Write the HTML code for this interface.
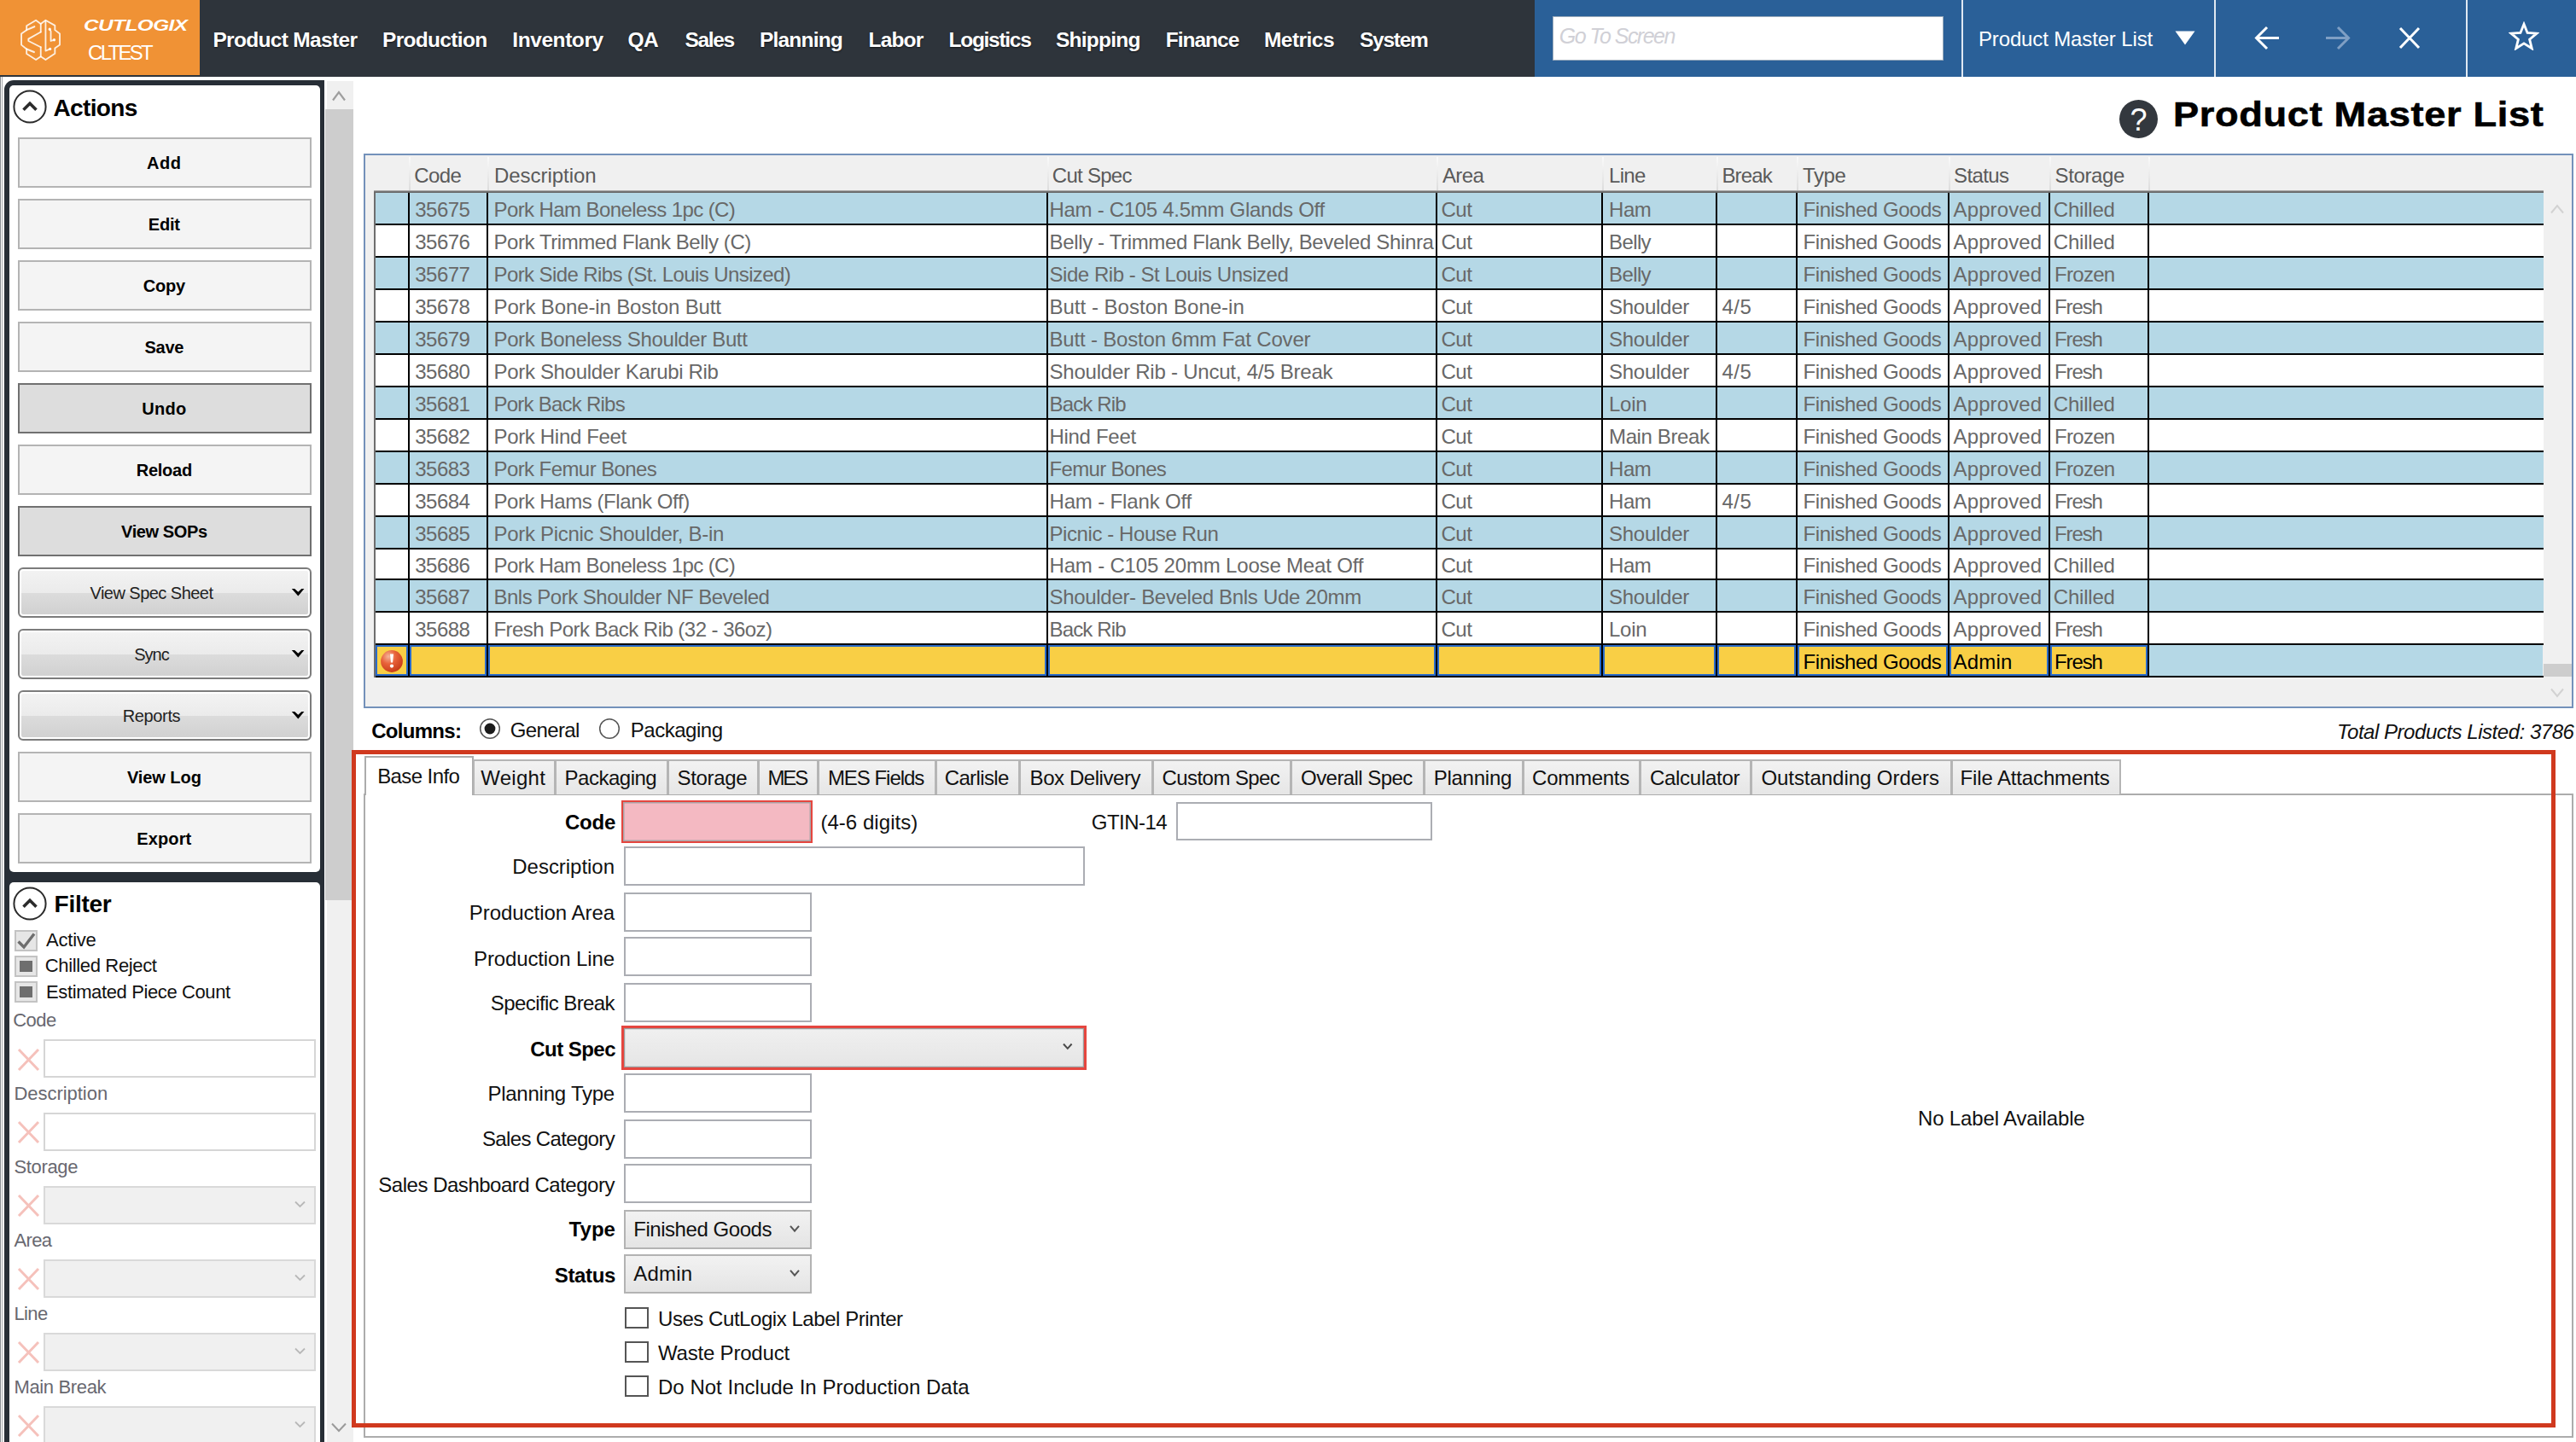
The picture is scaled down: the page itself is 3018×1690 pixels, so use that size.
<!DOCTYPE html>
<html><head><meta charset="utf-8"><title>Product Master List</title>
<style>
html,body{margin:0;padding:0}
body{width:3018px;height:1690px;overflow:hidden;background:#fff;position:relative;font-family:"Liberation Sans",sans-serif;font-kerning:normal}
div,span.t,svg{position:absolute;box-sizing:border-box}
span.t{white-space:pre;line-height:1;display:block}
.btn{background:#f4f4f4;border:2px solid #b4b4b4}
.btnd{background:#dddddd;border:2px solid #707070}
.dd{border:2px solid #7c7c7c;border-radius:6px;box-shadow:inset 0 0 0 2px #fff;background:linear-gradient(#f3f3f3 0%,#ebebeb 50%,#dcdcdc 50%,#d0d0d0 100%)}
.inp{background:#fff;border:2px solid #abadb3}
.finp{background:#fff;border:2px solid #d6d6d6}
.fdd{background:#f0f0f0;border:2px solid #d9d9d9}
.cmb{border:2px solid #b3b3b3;background:linear-gradient(#f2f2f2,#e4e4e4)}
.cb{background:#fff;border:2px solid #555}
.tab{background:linear-gradient(#f2f2f2,#e6e6e6);border:2px solid #b5b5b5;border-bottom:none}
</style></head><body>

<div style="left:0px;top:0px;width:3018px;height:90px;background:#2e343b"></div>
<div style="left:0px;top:0px;width:234.4px;height:88px;background:#f09235"></div>
<div style="left:1798px;top:0px;width:1220px;height:90px;background:#2a6098"></div>
<div style="left:2298px;top:0px;width:2px;height:90px;background:#dfe8f2"></div>
<div style="left:2594px;top:0px;width:2px;height:90px;background:#dfe8f2"></div>
<div style="left:2889px;top:0px;width:2px;height:90px;background:#dfe8f2"></div>
<svg style="left:15px;top:5px" width="225" height="85" viewBox="0 0 2576 973" fill="none" stroke="#fff" stroke-opacity=".85" stroke-width="21" stroke-linejoin="round" stroke-linecap="round">
<path d="M375 262 L310 215 L185 290 L185 345 L115 395 L115 545 L185 600 L185 665 L310 745 L375 700 L440 745 L565 660 L565 590 L630 545 L630 395 L565 345 L565 285 L440 215 Z"/>
<path d="M375 262 L375 372 M375 575 L375 700"/>
<path d="M185 345 L290 300" stroke-width="24"/>
<path d="M375 372 L210 465 L210 492 L375 575"/>
<path d="M185 600 L285 642" stroke-width="24"/>
<path d="M440 225 L440 625 L500 600"/>
<path d="M495 335 L510 362 L510 492 L555 478"/>
<circle cx="495" cy="335" r="9" fill="#fff"/><circle cx="555" cy="478" r="9" fill="#fff"/><circle cx="500" cy="600" r="9" fill="#fff"/>
</svg>
<span class="t" style="left:98px;top:20.8px;font-size:18.6px;font-weight:bold;font-style:italic;color:#fff;transform-origin:0 0;transform:scaleX(1.308);letter-spacing:-0.40px;">CUTLOGIX</span>
<span class="t" style="left:103.0px;top:48px;font-size:24px;line-height:27px;letter-spacing:-2.706px;color:#fff;">CLTEST</span>
<span class="t" style="left:249.4px;top:33px;font-size:24.5px;line-height:27px;letter-spacing:-0.675px;color:#fff;font-weight:bold;text-shadow:0 1px 2px rgba(0,0,0,.6);">Product Master</span>
<span class="t" style="left:448.0px;top:33px;font-size:24.5px;line-height:27px;letter-spacing:-0.680px;color:#fff;font-weight:bold;text-shadow:0 1px 2px rgba(0,0,0,.6);">Production</span>
<span class="t" style="left:600.3px;top:33px;font-size:24.5px;line-height:27px;letter-spacing:-0.430px;color:#fff;font-weight:bold;text-shadow:0 1px 2px rgba(0,0,0,.6);">Inventory</span>
<span class="t" style="left:735.4px;top:33px;font-size:24.5px;line-height:27px;letter-spacing:-0.325px;color:#fff;font-weight:bold;text-shadow:0 1px 2px rgba(0,0,0,.6);">QA</span>
<span class="t" style="left:802.6px;top:33px;font-size:24.5px;line-height:27px;letter-spacing:-1.385px;color:#fff;font-weight:bold;text-shadow:0 1px 2px rgba(0,0,0,.6);">Sales</span>
<span class="t" style="left:889.9px;top:33px;font-size:24.5px;line-height:27px;letter-spacing:-0.793px;color:#fff;font-weight:bold;text-shadow:0 1px 2px rgba(0,0,0,.6);">Planning</span>
<span class="t" style="left:1017.6px;top:33px;font-size:24.5px;line-height:27px;letter-spacing:-0.851px;color:#fff;font-weight:bold;text-shadow:0 1px 2px rgba(0,0,0,.6);">Labor</span>
<span class="t" style="left:1111.6px;top:33px;font-size:24.5px;line-height:27px;letter-spacing:-1.294px;color:#fff;font-weight:bold;text-shadow:0 1px 2px rgba(0,0,0,.6);">Logistics</span>
<span class="t" style="left:1237.0px;top:33px;font-size:24.5px;line-height:27px;letter-spacing:-0.773px;color:#fff;font-weight:bold;text-shadow:0 1px 2px rgba(0,0,0,.6);">Shipping</span>
<span class="t" style="left:1365.8px;top:33px;font-size:24.5px;line-height:27px;letter-spacing:-1.012px;color:#fff;font-weight:bold;text-shadow:0 1px 2px rgba(0,0,0,.6);">Finance</span>
<span class="t" style="left:1481.0px;top:33px;font-size:24.5px;line-height:27px;letter-spacing:-0.541px;color:#fff;font-weight:bold;text-shadow:0 1px 2px rgba(0,0,0,.6);">Metrics</span>
<span class="t" style="left:1593.0px;top:33px;font-size:24.5px;line-height:27px;letter-spacing:-1.260px;color:#fff;font-weight:bold;text-shadow:0 1px 2px rgba(0,0,0,.6);">System</span>
<div style="left:1819px;top:19px;width:458px;height:52px;background:#fff;border:1px solid #9ab"></div>
<span class="t" style="left:1826.8px;top:28px;font-size:25px;line-height:28px;letter-spacing:-1.528px;color:#d0d0d6;font-style:italic;">Go To Screen</span>
<span class="t" style="left:2318.0px;top:32px;font-size:24px;line-height:27px;letter-spacing:-0.144px;color:#fff;">Product Master List</span>
<svg style="left:2548px;top:36px" width="24" height="17" viewBox="0 0 24 17"><path d="M0.5 0.5 L23.5 0.5 L12 16.5 Z" fill="#fff"/></svg>
<svg style="left:2640px;top:29px" width="32" height="32" viewBox="0 0 32 32" fill="none" stroke="#fff" stroke-width="3"><path d="M30 15.5 H4 M16 3 L3.5 15.5 L16 28"/></svg>
<svg style="left:2723px;top:29px" width="32" height="32" viewBox="0 0 32 32" fill="none" stroke="#7f9fc4" stroke-width="3"><path d="M2 15.5 H28 M16 3 L28.5 15.5 L16 28"/></svg>
<svg style="left:2809px;top:30px" width="28" height="28" viewBox="0 0 28 28" fill="none" stroke="#fff" stroke-width="3"><path d="M3 3 L25 26 M25 3 L3 26"/></svg>
<svg style="left:2939px;top:24.5px" width="36" height="34" viewBox="0 0 38 36" fill="none" stroke="#fff" stroke-width="3" stroke-linejoin="miter"><path d="M19 3.5 L23.3 14.2 L34.8 15 L26 22.4 L28.8 33.6 L19 27.4 L9.2 33.6 L12 22.4 L3.2 15 L14.7 14.2 Z"/></svg>
<div style="left:2482.8px;top:117px;width:45px;height:45px;background:#33383e;border-radius:50%"></div>
<span class="t" style="left:2495.6px;top:120px;font-size:36px;line-height:41px;letter-spacing:-0.022px;color:#fff;">?</span>
<span class="t" style="left:2546.4px;top:114.0px;font-size:40px;font-weight:bold;color:#000;-webkit-text-stroke:0.6px #000;transform-origin:0 0;transform:scaleX(1.130);letter-spacing:0.585px">Product Master List</span>
<div style="left:0px;top:90px;width:1.4px;height:1600px;background:#85898e"></div>
<div style="left:2.4px;top:90px;width:1.1px;height:1600px;background:#a4a7ab"></div>
<div style="left:382.7px;top:95px;width:31.5px;height:1595px;background:#f0f0f0"></div>
<div style="left:380.8px;top:128.3px;width:33px;height:927.2px;background:#cdcdcd"></div>
<svg style="left:388.1px;top:105px" width="18" height="14" viewBox="0 0 18 14" fill="none" stroke="#9e9e9e" stroke-width="2.2"><path d="M2 12.5 L9 3 L16 12.5"/></svg>
<svg style="left:388px;top:1667px" width="18" height="12" viewBox="0 0 18 12" fill="none" stroke="#9a9a9a" stroke-width="2"><path d="M1 1.5 L9 10 L17 1.5"/></svg>
<div style="left:4.5px;top:94.4px;width:375.8px;height:1600px;background:#272e36;border-radius:11px 0 0 0"></div>
<div style="left:10.5px;top:100.3px;width:364px;height:921.9px;background:#fff;border-radius:5px"></div>
<div style="left:10.5px;top:1033.7px;width:364px;height:700px;background:#fff;border-radius:5px"></div>
<svg style="left:14.299999999999997px;top:104.4px" width="42" height="42" viewBox="0 0 42 42" fill="none" stroke="#2b2b2b"><circle cx="21" cy="21" r="18.6" stroke-width="2"/><path d="M13.5 24.8 L21 17.3 L28.5 24.8" stroke-width="3.6"/></svg>
<span class="t" style="left:62.4px;top:111px;font-size:28px;line-height:31px;letter-spacing:-0.611px;color:#000;font-weight:bold;">Actions</span>
<svg style="left:14.100000000000001px;top:1037.7px" width="42" height="42" viewBox="0 0 42 42" fill="none" stroke="#2b2b2b"><circle cx="21" cy="21" r="18.6" stroke-width="2"/><path d="M13.5 24.8 L21 17.3 L28.5 24.8" stroke-width="3.6"/></svg>
<span class="t" style="left:63.6px;top:1044px;font-size:28px;line-height:31px;letter-spacing:-0.276px;color:#000;font-weight:bold;">Filter</span>
<div class="btn" style="left:20.5px;top:160.5px;width:344px;height:59.5px;"></div>
<span class="t" style="left:172.1px;top:180px;font-size:20px;line-height:22px;letter-spacing:0.541px;color:#000;font-weight:bold;">Add</span>
<div class="btn" style="left:20.5px;top:232.5px;width:344px;height:59.5px;"></div>
<span class="t" style="left:173.7px;top:252px;font-size:20px;line-height:22px;letter-spacing:-0.143px;color:#000;font-weight:bold;">Edit</span>
<div class="btn" style="left:20.5px;top:304.5px;width:344px;height:59.5px;"></div>
<span class="t" style="left:167.7px;top:324px;font-size:20px;line-height:22px;letter-spacing:-0.175px;color:#000;font-weight:bold;">Copy</span>
<div class="btn" style="left:20.5px;top:376.5px;width:344px;height:59.5px;"></div>
<span class="t" style="left:169.5px;top:396px;font-size:20px;line-height:22px;letter-spacing:-0.277px;color:#000;font-weight:bold;">Save</span>
<div class="btnd" style="left:20.5px;top:448.5px;width:344px;height:59.5px;"></div>
<span class="t" style="left:166.2px;top:468px;font-size:20px;line-height:22px;letter-spacing:0.276px;color:#000;font-weight:bold;">Undo</span>
<div class="btn" style="left:20.5px;top:520.5px;width:344px;height:59.5px;"></div>
<span class="t" style="left:159.7px;top:540px;font-size:20px;line-height:22px;letter-spacing:-0.247px;color:#000;font-weight:bold;">Reload</span>
<div class="btnd" style="left:20.5px;top:592.5px;width:344px;height:59.5px;"></div>
<span class="t" style="left:142.1px;top:612px;font-size:20px;line-height:22px;letter-spacing:-0.403px;color:#000;font-weight:bold;">View SOPs</span>
<div class="dd" style="left:20.5px;top:664.5px;width:344px;height:59.5px;"></div>
<span class="t" style="left:105.5px;top:684px;font-size:20px;line-height:22px;letter-spacing:-0.535px;color:#222;">View Spec Sheet</span>
<svg style="left:341px;top:689.0px" width="16" height="11" viewBox="0 0 16 11"><path d="M0.8 1.1 L4.2 1.1 L8.3 4.8 L12.3 1.1 L15.4 1.1 L8.3 9.6 Z" fill="#000"/></svg>
<div class="dd" style="left:20.5px;top:736.5px;width:344px;height:59.5px;"></div>
<span class="t" style="left:157.3px;top:756px;font-size:20px;line-height:22px;letter-spacing:-1.031px;color:#222;">Sync</span>
<svg style="left:341px;top:761.0px" width="16" height="11" viewBox="0 0 16 11"><path d="M0.8 1.1 L4.2 1.1 L8.3 4.8 L12.3 1.1 L15.4 1.1 L8.3 9.6 Z" fill="#000"/></svg>
<div class="dd" style="left:20.5px;top:808.5px;width:344px;height:59.5px;"></div>
<span class="t" style="left:143.7px;top:828px;font-size:20px;line-height:22px;letter-spacing:-0.355px;color:#222;">Reports</span>
<svg style="left:341px;top:833.0px" width="16" height="11" viewBox="0 0 16 11"><path d="M0.8 1.1 L4.2 1.1 L8.3 4.8 L12.3 1.1 L15.4 1.1 L8.3 9.6 Z" fill="#000"/></svg>
<div class="btn" style="left:20.5px;top:880.5px;width:344px;height:59.5px;"></div>
<span class="t" style="left:148.9px;top:900px;font-size:20px;line-height:22px;letter-spacing:-0.065px;color:#000;font-weight:bold;">View Log</span>
<div class="btn" style="left:20.5px;top:952.5px;width:344px;height:59.5px;"></div>
<span class="t" style="left:160.3px;top:972px;font-size:20px;line-height:22px;letter-spacing:0.110px;color:#000;font-weight:bold;">Export</span>
<div style="left:16.6px;top:1090px;width:27.8px;height:25.4px;background:#e6e6e6;border:2px solid #c3c3c3"></div><svg style="left:19px;top:1092px" width="23" height="21" viewBox="0 0 23 21" fill="none" stroke="#6e6e6e" stroke-width="3.4"><path d="M2.5 11.5 L9 18 L21 2.5"/></svg>
<span class="t" style="left:54.0px;top:1089px;font-size:22px;line-height:25px;letter-spacing:-0.213px;color:#111;">Active</span>
<div style="left:16.6px;top:1120px;width:27.8px;height:25.4px;background:#e6e6e6;border:2px solid #c3c3c3"></div><div style="left:22.6px;top:1126.3px;width:15.8px;height:13px;background:#6e6e6e"></div>
<span class="t" style="left:52.8px;top:1119px;font-size:22px;line-height:25px;letter-spacing:-0.353px;color:#111;">Chilled Reject</span>
<div style="left:16.6px;top:1150px;width:27.8px;height:25.4px;background:#e6e6e6;border:2px solid #c3c3c3"></div><div style="left:22.6px;top:1156.3px;width:15.8px;height:13px;background:#6e6e6e"></div>
<span class="t" style="left:54.0px;top:1150px;font-size:22px;line-height:25px;letter-spacing:-0.380px;color:#111;">Estimated Piece Count</span>
<span class="t" style="left:15.2px;top:1183px;font-size:22px;line-height:25px;letter-spacing:-0.537px;color:#686870;">Code</span>
<div class="finp" style="left:50.6px;top:1218.0px;width:319px;height:45px;"></div>
<svg style="left:20px;top:1227.5px" width="27" height="28" viewBox="0 0 27 28" fill="none" stroke="#f5c1bb" stroke-width="3"><path d="M2 2 L25 26 M25 2 L2 26"/></svg>
<span class="t" style="left:16.4px;top:1269px;font-size:22px;line-height:25px;letter-spacing:-0.031px;color:#686870;">Description</span>
<div class="finp" style="left:50.6px;top:1303.9px;width:319px;height:45px;"></div>
<svg style="left:20px;top:1313.4px" width="27" height="28" viewBox="0 0 27 28" fill="none" stroke="#f5c1bb" stroke-width="3"><path d="M2 2 L25 26 M25 2 L2 26"/></svg>
<span class="t" style="left:16.4px;top:1355px;font-size:22px;line-height:25px;letter-spacing:-0.336px;color:#686870;">Storage</span>
<div class="fdd" style="left:50.6px;top:1389.8px;width:319px;height:45px;"></div>
<svg style="left:20px;top:1399.3px" width="27" height="28" viewBox="0 0 27 28" fill="none" stroke="#f5c1bb" stroke-width="3"><path d="M2 2 L25 26 M25 2 L2 26"/></svg>
<svg style="left:345px;top:1406.8px" width="13" height="9" viewBox="0 0 13 9" fill="none" stroke="#b8b8b8" stroke-width="1.8"><path d="M1 1.5 L6.5 7 L12 1.5"/></svg>
<span class="t" style="left:16.4px;top:1441px;font-size:22px;line-height:25px;letter-spacing:-0.603px;color:#686870;">Area</span>
<div class="fdd" style="left:50.6px;top:1475.7px;width:319px;height:45px;"></div>
<svg style="left:20px;top:1485.2px" width="27" height="28" viewBox="0 0 27 28" fill="none" stroke="#f5c1bb" stroke-width="3"><path d="M2 2 L25 26 M25 2 L2 26"/></svg>
<svg style="left:345px;top:1492.7px" width="13" height="9" viewBox="0 0 13 9" fill="none" stroke="#b8b8b8" stroke-width="1.8"><path d="M1 1.5 L6.5 7 L12 1.5"/></svg>
<span class="t" style="left:16.4px;top:1527px;font-size:22px;line-height:25px;letter-spacing:-0.612px;color:#686870;">Line</span>
<div class="fdd" style="left:50.6px;top:1561.6px;width:319px;height:45px;"></div>
<svg style="left:20px;top:1571.1px" width="27" height="28" viewBox="0 0 27 28" fill="none" stroke="#f5c1bb" stroke-width="3"><path d="M2 2 L25 26 M25 2 L2 26"/></svg>
<svg style="left:345px;top:1578.6px" width="13" height="9" viewBox="0 0 13 9" fill="none" stroke="#b8b8b8" stroke-width="1.8"><path d="M1 1.5 L6.5 7 L12 1.5"/></svg>
<span class="t" style="left:16.4px;top:1613px;font-size:22px;line-height:25px;letter-spacing:-0.339px;color:#686870;">Main Break</span>
<div class="fdd" style="left:50.6px;top:1647.5px;width:319px;height:45px;"></div>
<svg style="left:20px;top:1657.0px" width="27" height="28" viewBox="0 0 27 28" fill="none" stroke="#f5c1bb" stroke-width="3"><path d="M2 2 L25 26 M25 2 L2 26"/></svg>
<svg style="left:345px;top:1664.5px" width="13" height="9" viewBox="0 0 13 9" fill="none" stroke="#b8b8b8" stroke-width="1.8"><path d="M1 1.5 L6.5 7 L12 1.5"/></svg>
<div style="left:426.2px;top:180.4px;width:2589.2000000000003px;height:649.6px;background:#f0f0f0;border:2px solid #7391ba"></div>
<div style="left:479.2px;top:184px;width:2px;height:40px;background:linear-gradient(#fafafa,#dcdcdc)"></div>
<div style="left:571.3px;top:184px;width:2px;height:40px;background:linear-gradient(#fafafa,#dcdcdc)"></div>
<div style="left:1227px;top:184px;width:2px;height:40px;background:linear-gradient(#fafafa,#dcdcdc)"></div>
<div style="left:1682.8px;top:184px;width:2px;height:40px;background:linear-gradient(#fafafa,#dcdcdc)"></div>
<div style="left:1877px;top:184px;width:2px;height:40px;background:linear-gradient(#fafafa,#dcdcdc)"></div>
<div style="left:2010.8px;top:184px;width:2px;height:40px;background:linear-gradient(#fafafa,#dcdcdc)"></div>
<div style="left:2105.4px;top:184px;width:2px;height:40px;background:linear-gradient(#fafafa,#dcdcdc)"></div>
<div style="left:2282.7px;top:184px;width:2px;height:40px;background:linear-gradient(#fafafa,#dcdcdc)"></div>
<div style="left:2401px;top:184px;width:2px;height:40px;background:linear-gradient(#fafafa,#dcdcdc)"></div>
<div style="left:2516.6px;top:184px;width:2px;height:40px;background:linear-gradient(#fafafa,#dcdcdc)"></div>
<span class="t" style="left:485.3px;top:192px;font-size:24px;line-height:27px;letter-spacing:-0.579px;color:#5a5a5a;">Code</span>
<span class="t" style="left:578.9px;top:192px;font-size:24px;line-height:27px;letter-spacing:-0.032px;color:#5a5a5a;">Description</span>
<span class="t" style="left:1232.8px;top:192px;font-size:24px;line-height:27px;letter-spacing:-0.723px;color:#5a5a5a;">Cut Spec</span>
<span class="t" style="left:1690.0px;top:192px;font-size:24px;line-height:27px;letter-spacing:-0.651px;color:#5a5a5a;">Area</span>
<span class="t" style="left:1885.0px;top:192px;font-size:24px;line-height:27px;letter-spacing:-0.660px;color:#5a5a5a;">Line</span>
<span class="t" style="left:2017.5px;top:192px;font-size:24px;line-height:27px;letter-spacing:-0.890px;color:#5a5a5a;">Break</span>
<span class="t" style="left:2112.0px;top:192px;font-size:24px;line-height:27px;letter-spacing:-0.431px;color:#5a5a5a;">Type</span>
<span class="t" style="left:2289.0px;top:192px;font-size:24px;line-height:27px;letter-spacing:-0.607px;color:#5a5a5a;">Status</span>
<span class="t" style="left:2407.5px;top:192px;font-size:24px;line-height:27px;letter-spacing:-0.363px;color:#5a5a5a;">Storage</span>
<div style="left:440px;top:226px;width:2539.5px;height:36px;background:#b5d8e6"></div>
<span class="t" style="left:486.3px;top:232px;font-size:24px;line-height:27px;letter-spacing:-0.522px;color:#686868;">35675</span>
<span class="t" style="left:578.5px;top:232px;font-size:24px;line-height:27px;letter-spacing:-0.590px;color:#686868;">Pork Ham Boneless 1pc (C)</span>
<span class="t" style="left:1229.5px;top:232px;font-size:24px;line-height:27px;letter-spacing:-0.297px;color:#686868;">Ham - C105 4.5mm Glands Off</span>
<span class="t" style="left:1688.4px;top:232px;font-size:24px;line-height:27px;letter-spacing:-0.414px;color:#686868;">Cut</span>
<span class="t" style="left:1885.0px;top:232px;font-size:24px;line-height:27px;letter-spacing:-0.421px;color:#686868;">Ham</span>
<span class="t" style="left:2112.6px;top:232px;font-size:24px;line-height:27px;letter-spacing:-0.448px;color:#686868;">Finished Goods</span>
<span class="t" style="left:2288.6px;top:232px;font-size:24px;line-height:27px;letter-spacing:0.099px;color:#686868;">Approved</span>
<span class="t" style="left:2405.8px;top:232px;font-size:24px;line-height:27px;letter-spacing:-0.207px;color:#686868;">Chilled</span>
<div style="left:440px;top:264px;width:2539.5px;height:36px;background:#fff"></div>
<span class="t" style="left:486.3px;top:270px;font-size:24px;line-height:27px;letter-spacing:-0.522px;color:#686868;">35676</span>
<span class="t" style="left:578.5px;top:270px;font-size:24px;line-height:27px;letter-spacing:-0.430px;color:#686868;">Pork Trimmed Flank Belly (C)</span>
<span class="t" style="left:1229.5px;top:270px;font-size:24px;line-height:27px;letter-spacing:-0.348px;color:#686868;">Belly - Trimmed Flank Belly, Beveled Shinra</span>
<span class="t" style="left:1688.4px;top:270px;font-size:24px;line-height:27px;letter-spacing:-0.414px;color:#686868;">Cut</span>
<span class="t" style="left:1885.0px;top:270px;font-size:24px;line-height:27px;letter-spacing:-0.604px;color:#686868;">Belly</span>
<span class="t" style="left:2112.6px;top:270px;font-size:24px;line-height:27px;letter-spacing:-0.448px;color:#686868;">Finished Goods</span>
<span class="t" style="left:2288.6px;top:270px;font-size:24px;line-height:27px;letter-spacing:0.099px;color:#686868;">Approved</span>
<span class="t" style="left:2405.8px;top:270px;font-size:24px;line-height:27px;letter-spacing:-0.207px;color:#686868;">Chilled</span>
<div style="left:440px;top:302px;width:2539.5px;height:36px;background:#b5d8e6"></div>
<span class="t" style="left:486.3px;top:308px;font-size:24px;line-height:27px;letter-spacing:-0.522px;color:#686868;">35677</span>
<span class="t" style="left:578.5px;top:308px;font-size:24px;line-height:27px;letter-spacing:-0.603px;color:#686868;">Pork Side Ribs (St. Louis Unsized)</span>
<span class="t" style="left:1229.5px;top:308px;font-size:24px;line-height:27px;letter-spacing:-0.455px;color:#686868;">Side Rib - St Louis Unsized</span>
<span class="t" style="left:1688.4px;top:308px;font-size:24px;line-height:27px;letter-spacing:-0.414px;color:#686868;">Cut</span>
<span class="t" style="left:1885.0px;top:308px;font-size:24px;line-height:27px;letter-spacing:-0.604px;color:#686868;">Belly</span>
<span class="t" style="left:2112.6px;top:308px;font-size:24px;line-height:27px;letter-spacing:-0.448px;color:#686868;">Finished Goods</span>
<span class="t" style="left:2288.6px;top:308px;font-size:24px;line-height:27px;letter-spacing:0.099px;color:#686868;">Approved</span>
<span class="t" style="left:2407.0px;top:308px;font-size:24px;line-height:27px;letter-spacing:-0.701px;color:#686868;">Frozen</span>
<div style="left:440px;top:340px;width:2539.5px;height:36px;background:#fff"></div>
<span class="t" style="left:486.3px;top:346px;font-size:24px;line-height:27px;letter-spacing:-0.522px;color:#686868;">35678</span>
<span class="t" style="left:578.5px;top:346px;font-size:24px;line-height:27px;letter-spacing:-0.131px;color:#686868;">Pork Bone-in Boston Butt</span>
<span class="t" style="left:1229.5px;top:346px;font-size:24px;line-height:27px;letter-spacing:0.008px;color:#686868;">Butt - Boston Bone-in</span>
<span class="t" style="left:1688.4px;top:346px;font-size:24px;line-height:27px;letter-spacing:-0.414px;color:#686868;">Cut</span>
<span class="t" style="left:1885.0px;top:346px;font-size:24px;line-height:27px;letter-spacing:-0.252px;color:#686868;">Shoulder</span>
<span class="t" style="left:2017.5px;top:346px;font-size:24px;line-height:27px;letter-spacing:0.470px;color:#686868;">4/5</span>
<span class="t" style="left:2112.6px;top:346px;font-size:24px;line-height:27px;letter-spacing:-0.448px;color:#686868;">Finished Goods</span>
<span class="t" style="left:2288.6px;top:346px;font-size:24px;line-height:27px;letter-spacing:0.099px;color:#686868;">Approved</span>
<span class="t" style="left:2407.0px;top:346px;font-size:24px;line-height:27px;letter-spacing:-1.106px;color:#686868;">Fresh</span>
<div style="left:440px;top:378px;width:2539.5px;height:36px;background:#b5d8e6"></div>
<span class="t" style="left:486.3px;top:384px;font-size:24px;line-height:27px;letter-spacing:-0.522px;color:#686868;">35679</span>
<span class="t" style="left:578.5px;top:384px;font-size:24px;line-height:27px;letter-spacing:-0.366px;color:#686868;">Pork Boneless Shoulder Butt</span>
<span class="t" style="left:1229.5px;top:384px;font-size:24px;line-height:27px;letter-spacing:-0.182px;color:#686868;">Butt - Boston 6mm Fat Cover</span>
<span class="t" style="left:1688.4px;top:384px;font-size:24px;line-height:27px;letter-spacing:-0.414px;color:#686868;">Cut</span>
<span class="t" style="left:1885.0px;top:384px;font-size:24px;line-height:27px;letter-spacing:-0.252px;color:#686868;">Shoulder</span>
<span class="t" style="left:2112.6px;top:384px;font-size:24px;line-height:27px;letter-spacing:-0.448px;color:#686868;">Finished Goods</span>
<span class="t" style="left:2288.6px;top:384px;font-size:24px;line-height:27px;letter-spacing:0.099px;color:#686868;">Approved</span>
<span class="t" style="left:2407.0px;top:384px;font-size:24px;line-height:27px;letter-spacing:-1.106px;color:#686868;">Fresh</span>
<div style="left:440px;top:416px;width:2539.5px;height:36px;background:#fff"></div>
<span class="t" style="left:486.3px;top:422px;font-size:24px;line-height:27px;letter-spacing:-0.522px;color:#686868;">35680</span>
<span class="t" style="left:578.5px;top:422px;font-size:24px;line-height:27px;letter-spacing:-0.321px;color:#686868;">Pork Shoulder Karubi Rib</span>
<span class="t" style="left:1229.5px;top:422px;font-size:24px;line-height:27px;letter-spacing:-0.225px;color:#686868;">Shoulder Rib - Uncut, 4/5 Break</span>
<span class="t" style="left:1688.4px;top:422px;font-size:24px;line-height:27px;letter-spacing:-0.414px;color:#686868;">Cut</span>
<span class="t" style="left:1885.0px;top:422px;font-size:24px;line-height:27px;letter-spacing:-0.252px;color:#686868;">Shoulder</span>
<span class="t" style="left:2017.5px;top:422px;font-size:24px;line-height:27px;letter-spacing:0.470px;color:#686868;">4/5</span>
<span class="t" style="left:2112.6px;top:422px;font-size:24px;line-height:27px;letter-spacing:-0.448px;color:#686868;">Finished Goods</span>
<span class="t" style="left:2288.6px;top:422px;font-size:24px;line-height:27px;letter-spacing:0.099px;color:#686868;">Approved</span>
<span class="t" style="left:2407.0px;top:422px;font-size:24px;line-height:27px;letter-spacing:-1.106px;color:#686868;">Fresh</span>
<div style="left:440px;top:454px;width:2539.5px;height:36px;background:#b5d8e6"></div>
<span class="t" style="left:486.3px;top:460px;font-size:24px;line-height:27px;letter-spacing:-0.522px;color:#686868;">35681</span>
<span class="t" style="left:578.5px;top:460px;font-size:24px;line-height:27px;letter-spacing:-0.758px;color:#686868;">Pork Back Ribs</span>
<span class="t" style="left:1229.5px;top:460px;font-size:24px;line-height:27px;letter-spacing:-0.859px;color:#686868;">Back Rib</span>
<span class="t" style="left:1688.4px;top:460px;font-size:24px;line-height:27px;letter-spacing:-0.414px;color:#686868;">Cut</span>
<span class="t" style="left:1885.0px;top:460px;font-size:24px;line-height:27px;letter-spacing:-0.284px;color:#686868;">Loin</span>
<span class="t" style="left:2112.6px;top:460px;font-size:24px;line-height:27px;letter-spacing:-0.448px;color:#686868;">Finished Goods</span>
<span class="t" style="left:2288.6px;top:460px;font-size:24px;line-height:27px;letter-spacing:0.099px;color:#686868;">Approved</span>
<span class="t" style="left:2405.8px;top:460px;font-size:24px;line-height:27px;letter-spacing:-0.207px;color:#686868;">Chilled</span>
<div style="left:440px;top:492px;width:2539.5px;height:36px;background:#fff"></div>
<span class="t" style="left:486.3px;top:498px;font-size:24px;line-height:27px;letter-spacing:-0.522px;color:#686868;">35682</span>
<span class="t" style="left:578.5px;top:498px;font-size:24px;line-height:27px;letter-spacing:-0.329px;color:#686868;">Pork Hind Feet</span>
<span class="t" style="left:1229.5px;top:498px;font-size:24px;line-height:27px;letter-spacing:-0.303px;color:#686868;">Hind Feet</span>
<span class="t" style="left:1688.4px;top:498px;font-size:24px;line-height:27px;letter-spacing:-0.414px;color:#686868;">Cut</span>
<span class="t" style="left:1885.0px;top:498px;font-size:24px;line-height:27px;letter-spacing:-0.367px;color:#686868;">Main Break</span>
<span class="t" style="left:2112.6px;top:498px;font-size:24px;line-height:27px;letter-spacing:-0.448px;color:#686868;">Finished Goods</span>
<span class="t" style="left:2288.6px;top:498px;font-size:24px;line-height:27px;letter-spacing:0.099px;color:#686868;">Approved</span>
<span class="t" style="left:2407.0px;top:498px;font-size:24px;line-height:27px;letter-spacing:-0.701px;color:#686868;">Frozen</span>
<div style="left:440px;top:530px;width:2539.5px;height:36px;background:#b5d8e6"></div>
<span class="t" style="left:486.3px;top:536px;font-size:24px;line-height:27px;letter-spacing:-0.522px;color:#686868;">35683</span>
<span class="t" style="left:578.5px;top:536px;font-size:24px;line-height:27px;letter-spacing:-0.581px;color:#686868;">Pork Femur Bones</span>
<span class="t" style="left:1229.5px;top:536px;font-size:24px;line-height:27px;letter-spacing:-0.674px;color:#686868;">Femur Bones</span>
<span class="t" style="left:1688.4px;top:536px;font-size:24px;line-height:27px;letter-spacing:-0.414px;color:#686868;">Cut</span>
<span class="t" style="left:1885.0px;top:536px;font-size:24px;line-height:27px;letter-spacing:-0.421px;color:#686868;">Ham</span>
<span class="t" style="left:2112.6px;top:536px;font-size:24px;line-height:27px;letter-spacing:-0.448px;color:#686868;">Finished Goods</span>
<span class="t" style="left:2288.6px;top:536px;font-size:24px;line-height:27px;letter-spacing:0.099px;color:#686868;">Approved</span>
<span class="t" style="left:2407.0px;top:536px;font-size:24px;line-height:27px;letter-spacing:-0.701px;color:#686868;">Frozen</span>
<div style="left:440px;top:568px;width:2539.5px;height:36px;background:#fff"></div>
<span class="t" style="left:486.3px;top:574px;font-size:24px;line-height:27px;letter-spacing:-0.522px;color:#686868;">35684</span>
<span class="t" style="left:578.5px;top:574px;font-size:24px;line-height:27px;letter-spacing:-0.432px;color:#686868;">Pork Hams (Flank Off)</span>
<span class="t" style="left:1229.5px;top:574px;font-size:24px;line-height:27px;letter-spacing:-0.155px;color:#686868;">Ham - Flank Off</span>
<span class="t" style="left:1688.4px;top:574px;font-size:24px;line-height:27px;letter-spacing:-0.414px;color:#686868;">Cut</span>
<span class="t" style="left:1885.0px;top:574px;font-size:24px;line-height:27px;letter-spacing:-0.421px;color:#686868;">Ham</span>
<span class="t" style="left:2017.5px;top:574px;font-size:24px;line-height:27px;letter-spacing:0.470px;color:#686868;">4/5</span>
<span class="t" style="left:2112.6px;top:574px;font-size:24px;line-height:27px;letter-spacing:-0.448px;color:#686868;">Finished Goods</span>
<span class="t" style="left:2288.6px;top:574px;font-size:24px;line-height:27px;letter-spacing:0.099px;color:#686868;">Approved</span>
<span class="t" style="left:2407.0px;top:574px;font-size:24px;line-height:27px;letter-spacing:-1.106px;color:#686868;">Fresh</span>
<div style="left:440px;top:606px;width:2539.5px;height:36px;background:#b5d8e6"></div>
<span class="t" style="left:486.3px;top:612px;font-size:24px;line-height:27px;letter-spacing:-0.522px;color:#686868;">35685</span>
<span class="t" style="left:578.5px;top:612px;font-size:24px;line-height:27px;letter-spacing:-0.304px;color:#686868;">Pork Picnic Shoulder, B-in</span>
<span class="t" style="left:1229.5px;top:612px;font-size:24px;line-height:27px;letter-spacing:-0.418px;color:#686868;">Picnic - House Run</span>
<span class="t" style="left:1688.4px;top:612px;font-size:24px;line-height:27px;letter-spacing:-0.414px;color:#686868;">Cut</span>
<span class="t" style="left:1885.0px;top:612px;font-size:24px;line-height:27px;letter-spacing:-0.252px;color:#686868;">Shoulder</span>
<span class="t" style="left:2112.6px;top:612px;font-size:24px;line-height:27px;letter-spacing:-0.448px;color:#686868;">Finished Goods</span>
<span class="t" style="left:2288.6px;top:612px;font-size:24px;line-height:27px;letter-spacing:0.099px;color:#686868;">Approved</span>
<span class="t" style="left:2407.0px;top:612px;font-size:24px;line-height:27px;letter-spacing:-1.106px;color:#686868;">Fresh</span>
<div style="left:440px;top:644px;width:2539.5px;height:34px;background:#fff"></div>
<span class="t" style="left:486.3px;top:649px;font-size:24px;line-height:27px;letter-spacing:-0.522px;color:#686868;">35686</span>
<span class="t" style="left:578.5px;top:649px;font-size:24px;line-height:27px;letter-spacing:-0.590px;color:#686868;">Pork Ham Boneless 1pc (C)</span>
<span class="t" style="left:1229.5px;top:649px;font-size:24px;line-height:27px;letter-spacing:-0.177px;color:#686868;">Ham - C105 20mm Loose Meat Off</span>
<span class="t" style="left:1688.4px;top:649px;font-size:24px;line-height:27px;letter-spacing:-0.414px;color:#686868;">Cut</span>
<span class="t" style="left:1885.0px;top:649px;font-size:24px;line-height:27px;letter-spacing:-0.421px;color:#686868;">Ham</span>
<span class="t" style="left:2112.6px;top:649px;font-size:24px;line-height:27px;letter-spacing:-0.448px;color:#686868;">Finished Goods</span>
<span class="t" style="left:2288.6px;top:649px;font-size:24px;line-height:27px;letter-spacing:0.099px;color:#686868;">Approved</span>
<span class="t" style="left:2405.8px;top:649px;font-size:24px;line-height:27px;letter-spacing:-0.207px;color:#686868;">Chilled</span>
<div style="left:440px;top:680px;width:2539.5px;height:36px;background:#b5d8e6"></div>
<span class="t" style="left:486.3px;top:686px;font-size:24px;line-height:27px;letter-spacing:-0.522px;color:#686868;">35687</span>
<span class="t" style="left:578.5px;top:686px;font-size:24px;line-height:27px;letter-spacing:-0.501px;color:#686868;">Bnls Pork Shoulder NF Beveled</span>
<span class="t" style="left:1229.5px;top:686px;font-size:24px;line-height:27px;letter-spacing:-0.308px;color:#686868;">Shoulder- Beveled Bnls Ude 20mm</span>
<span class="t" style="left:1688.4px;top:686px;font-size:24px;line-height:27px;letter-spacing:-0.414px;color:#686868;">Cut</span>
<span class="t" style="left:1885.0px;top:686px;font-size:24px;line-height:27px;letter-spacing:-0.252px;color:#686868;">Shoulder</span>
<span class="t" style="left:2112.6px;top:686px;font-size:24px;line-height:27px;letter-spacing:-0.448px;color:#686868;">Finished Goods</span>
<span class="t" style="left:2288.6px;top:686px;font-size:24px;line-height:27px;letter-spacing:0.099px;color:#686868;">Approved</span>
<span class="t" style="left:2405.8px;top:686px;font-size:24px;line-height:27px;letter-spacing:-0.207px;color:#686868;">Chilled</span>
<div style="left:440px;top:718px;width:2539.5px;height:36px;background:#fff"></div>
<span class="t" style="left:486.3px;top:724px;font-size:24px;line-height:27px;letter-spacing:-0.522px;color:#686868;">35688</span>
<span class="t" style="left:578.5px;top:724px;font-size:24px;line-height:27px;letter-spacing:-0.543px;color:#686868;">Fresh Pork Back Rib (32 - 36oz)</span>
<span class="t" style="left:1229.5px;top:724px;font-size:24px;line-height:27px;letter-spacing:-0.859px;color:#686868;">Back Rib</span>
<span class="t" style="left:1688.4px;top:724px;font-size:24px;line-height:27px;letter-spacing:-0.414px;color:#686868;">Cut</span>
<span class="t" style="left:1885.0px;top:724px;font-size:24px;line-height:27px;letter-spacing:-0.284px;color:#686868;">Loin</span>
<span class="t" style="left:2112.6px;top:724px;font-size:24px;line-height:27px;letter-spacing:-0.448px;color:#686868;">Finished Goods</span>
<span class="t" style="left:2288.6px;top:724px;font-size:24px;line-height:27px;letter-spacing:0.099px;color:#686868;">Approved</span>
<span class="t" style="left:2407.0px;top:724px;font-size:24px;line-height:27px;letter-spacing:-1.106px;color:#686868;">Fresh</span>
<div style="left:440px;top:756px;width:2077.6px;height:35.5px;background:#f9cf45"></div>
<div style="left:2517.6px;top:756px;width:461.9000000000001px;height:35.5px;background:#b5d8e6"></div>
<span class="t" style="left:2112.6px;top:762px;font-size:24px;line-height:27px;letter-spacing:-0.448px;color:#000;">Finished Goods</span>
<span class="t" style="left:2288.6px;top:762px;font-size:24px;line-height:27px;letter-spacing:0.203px;color:#000;">Admin</span>
<span class="t" style="left:2407.0px;top:762px;font-size:24px;line-height:27px;letter-spacing:-1.106px;color:#000;">Fresh</span>
<div style="left:438px;top:262px;width:2541.5px;height:2.2px;background:#000"></div>
<div style="left:438px;top:300px;width:2541.5px;height:2.2px;background:#000"></div>
<div style="left:438px;top:338px;width:2541.5px;height:2.2px;background:#000"></div>
<div style="left:438px;top:376px;width:2541.5px;height:2.2px;background:#000"></div>
<div style="left:438px;top:414px;width:2541.5px;height:2.2px;background:#000"></div>
<div style="left:438px;top:452px;width:2541.5px;height:2.2px;background:#000"></div>
<div style="left:438px;top:490px;width:2541.5px;height:2.2px;background:#000"></div>
<div style="left:438px;top:528px;width:2541.5px;height:2.2px;background:#000"></div>
<div style="left:438px;top:566px;width:2541.5px;height:2.2px;background:#000"></div>
<div style="left:438px;top:604px;width:2541.5px;height:2.2px;background:#000"></div>
<div style="left:438px;top:642px;width:2541.5px;height:2.2px;background:#000"></div>
<div style="left:438px;top:678px;width:2541.5px;height:2.2px;background:#000"></div>
<div style="left:438px;top:716px;width:2541.5px;height:2.2px;background:#000"></div>
<div style="left:438px;top:754px;width:2541.5px;height:2.2px;background:#000"></div>
<div style="left:438px;top:791.5px;width:2541.5px;height:2.2px;background:#000"></div>
<div style="left:478.2px;top:226px;width:2px;height:567.7px;background:#000"></div>
<div style="left:570.3px;top:226px;width:2px;height:567.7px;background:#000"></div>
<div style="left:1226px;top:226px;width:2px;height:567.7px;background:#000"></div>
<div style="left:1681.8px;top:226px;width:2px;height:567.7px;background:#000"></div>
<div style="left:1876px;top:226px;width:2px;height:567.7px;background:#000"></div>
<div style="left:2009.8px;top:226px;width:2px;height:567.7px;background:#000"></div>
<div style="left:2104.4px;top:226px;width:2px;height:567.7px;background:#000"></div>
<div style="left:2281.7px;top:226px;width:2px;height:567.7px;background:#000"></div>
<div style="left:2400px;top:226px;width:2px;height:567.7px;background:#000"></div>
<div style="left:2515.6px;top:226px;width:2px;height:567.7px;background:#000"></div>
<div style="left:437.5px;top:225px;width:2.5px;height:568.7px;background:#6e6e6e"></div>
<div style="left:440px;top:756px;width:38.19999999999999px;height:36px;border:2px solid #2a6ac9"></div>
<div style="left:480.2px;top:756px;width:90.09999999999997px;height:36px;border:2px solid #2a6ac9"></div>
<div style="left:572.3px;top:756px;width:653.7px;height:36px;border:2px solid #2a6ac9"></div>
<div style="left:1228px;top:756px;width:453.79999999999995px;height:36px;border:2px solid #2a6ac9"></div>
<div style="left:1683.8px;top:756px;width:192.20000000000005px;height:36px;border:2px solid #2a6ac9"></div>
<div style="left:1878px;top:756px;width:131.79999999999995px;height:36px;border:2px solid #2a6ac9"></div>
<div style="left:2011.8px;top:756px;width:92.60000000000014px;height:36px;border:2px solid #2a6ac9"></div>
<div style="left:2106.4px;top:756px;width:175.29999999999973px;height:36px;border:2px solid #2a6ac9"></div>
<div style="left:2283.7px;top:756px;width:116.30000000000018px;height:36px;border:2px solid #2a6ac9"></div>
<div style="left:2402px;top:756px;width:113.59999999999991px;height:36px;border:2px solid #2a6ac9"></div>
<svg style="left:445.3px;top:761px" width="28" height="28" viewBox="0 0 28 28"><defs><radialGradient id="eg" cx="35%" cy="28%" r="75%"><stop offset="0" stop-color="#f4b49a"/><stop offset=".45" stop-color="#e8623a"/><stop offset="1" stop-color="#c73c18"/></radialGradient></defs><circle cx="14" cy="14" r="12.9" fill="url(#eg)"/><path d="M12 5.5 h4 l-0.9 10 h-2.2 Z" fill="#fff"/><circle cx="14" cy="19.6" r="2.1" fill="#fff"/></svg>
<div style="left:438px;top:222.6px;width:2541.5px;height:3.6px;background:linear-gradient(#c4c4c4,#6c6c6c 55%,#666)"></div>
<div style="left:2979.6px;top:226px;width:33.8px;height:602px;background:#f0f0f0"></div>
<div style="left:2979.6px;top:778.2px;width:33.8px;height:15.2px;background:#cdcdcd"></div>
<svg style="left:2987.4px;top:237.5px" width="18" height="13" viewBox="0 0 18 13" fill="none" stroke="#d2d2d2" stroke-width="2"><path d="M2 11.5 L9 3 L16 11.5"/></svg>
<svg style="left:2987.4px;top:806px" width="18" height="13" viewBox="0 0 18 13" fill="none" stroke="#d2d2d2" stroke-width="2"><path d="M2 1.5 L9 10 L16 1.5"/></svg>
<span class="t" style="left:435.2px;top:843px;font-size:24px;line-height:27px;letter-spacing:-0.708px;color:#000;font-weight:bold;">Columns:</span>
<svg style="left:561.2px;top:840.8px" width="26" height="26" viewBox="0 0 26 26"><circle cx="13" cy="13" r="11.3" fill="#fff" stroke="#555" stroke-width="1.5"/><circle cx="13" cy="13" r="6.4" fill="#1a1a1a"/></svg>
<span class="t" style="left:597.8px;top:842px;font-size:24px;line-height:27px;letter-spacing:-0.642px;color:#111;">General</span>
<svg style="left:701px;top:840.8px" width="26" height="26" viewBox="0 0 26 26"><circle cx="13" cy="13" r="11.3" fill="#fff" stroke="#555" stroke-width="1.5"/></svg>
<span class="t" style="left:738.8px;top:842px;font-size:24px;line-height:27px;letter-spacing:-0.483px;color:#111;">Packaging</span>
<span class="t" style="left:2738.0px;top:844px;font-size:24px;line-height:27px;letter-spacing:-0.462px;color:#111;font-style:italic;">Total Products Listed: 3786</span>
<div style="left:426.4px;top:929.8px;width:2589.0px;height:755.6000000000001px;background:#fff;border:2px solid #acacac"></div>
<div style="left:426.5px;top:886px;width:128.0px;height:46px;background:#fff;border:2px solid #acacac;border-bottom:none"></div>
<span class="t" style="left:442.2px;top:896px;font-size:24px;line-height:27px;letter-spacing:-0.589px;color:#111;">Base Info</span>
<div class="tab" style="left:553.5px;top:890px;width:97.5px;height:40.5px;"></div>
<span class="t" style="left:563.2px;top:898px;font-size:24px;line-height:27px;letter-spacing:0.286px;color:#111;">Weight</span>
<div class="tab" style="left:650px;top:890px;width:133px;height:40.5px;"></div>
<span class="t" style="left:661.5px;top:898px;font-size:24px;line-height:27px;letter-spacing:-0.483px;color:#111;">Packaging</span>
<div class="tab" style="left:782px;top:890px;width:107px;height:40.5px;"></div>
<span class="t" style="left:793.6px;top:898px;font-size:24px;line-height:27px;letter-spacing:-0.363px;color:#111;">Storage</span>
<div class="tab" style="left:888px;top:890px;width:71px;height:40.5px;"></div>
<span class="t" style="left:899.4px;top:898px;font-size:24px;line-height:27px;letter-spacing:-2.021px;color:#111;">MES</span>
<div class="tab" style="left:958px;top:890px;width:138.5px;height:40.5px;"></div>
<span class="t" style="left:969.9px;top:898px;font-size:24px;line-height:27px;letter-spacing:-1.027px;color:#111;">MES Fields</span>
<div class="tab" style="left:1095.5px;top:890px;width:99.5px;height:40.5px;"></div>
<span class="t" style="left:1106.7px;top:898px;font-size:24px;line-height:27px;letter-spacing:-0.629px;color:#111;">Carlisle</span>
<div class="tab" style="left:1194px;top:890px;width:157px;height:40.5px;"></div>
<span class="t" style="left:1206.6px;top:898px;font-size:24px;line-height:27px;letter-spacing:-0.431px;color:#111;">Box Delivery</span>
<div class="tab" style="left:1350px;top:890px;width:163px;height:40.5px;"></div>
<span class="t" style="left:1361.6px;top:898px;font-size:24px;line-height:27px;letter-spacing:-0.582px;color:#111;">Custom Spec</span>
<div class="tab" style="left:1512px;top:890px;width:157px;height:40.5px;"></div>
<span class="t" style="left:1524.1px;top:898px;font-size:24px;line-height:27px;letter-spacing:-0.571px;color:#111;">Overall Spec</span>
<div class="tab" style="left:1668px;top:890px;width:117px;height:40.5px;"></div>
<span class="t" style="left:1679.7px;top:898px;font-size:24px;line-height:27px;letter-spacing:-0.252px;color:#111;">Planning</span>
<div class="tab" style="left:1784px;top:890px;width:138.29999999999995px;height:40.5px;"></div>
<span class="t" style="left:1795.1px;top:898px;font-size:24px;line-height:27px;letter-spacing:-0.265px;color:#111;">Comments</span>
<div class="tab" style="left:1921.3px;top:890px;width:130.70000000000005px;height:40.5px;"></div>
<span class="t" style="left:1932.9px;top:898px;font-size:24px;line-height:27px;letter-spacing:-0.268px;color:#111;">Calculator</span>
<div class="tab" style="left:2051px;top:890px;width:235.5px;height:40.5px;"></div>
<span class="t" style="left:2063.4px;top:898px;font-size:24px;line-height:27px;letter-spacing:-0.051px;color:#111;">Outstanding Orders</span>
<div class="tab" style="left:2285.5px;top:890px;width:199.5px;height:40.5px;"></div>
<span class="t" style="left:2296.6px;top:898px;font-size:24px;line-height:27px;letter-spacing:-0.142px;color:#111;">File Attachments</span>
<span class="t" style="left:662.0px;top:950px;font-size:24px;line-height:27px;letter-spacing:-0.250px;color:#000;font-weight:bold;">Code</span>
<div style="left:728.2px;top:937.5999999999999px;width:224px;height:50.3px;background:#f4b9c2;border:2.6px solid #e5463f;box-shadow:inset 0 0 0 1.5px #a9a3a6"></div>
<span class="t" style="left:961.4px;top:950px;font-size:24px;line-height:27px;letter-spacing:0.047px;color:#111;">(4-6 digits)</span>
<span class="t" style="left:1278.8px;top:950px;font-size:24px;line-height:27px;letter-spacing:-0.544px;color:#111;">GTIN-14</span>
<div class="inp" style="left:1378px;top:939.8px;width:300px;height:45.5px;"></div>
<span class="t" style="left:600.3px;top:1002px;font-size:24px;line-height:27px;letter-spacing:-0.032px;color:#111;">Description</span>
<div class="inp" style="left:730.5px;top:992.2px;width:540px;height:45.5px;"></div>
<span class="t" style="left:549.7px;top:1056px;font-size:24px;line-height:27px;letter-spacing:-0.029px;color:#111;">Production Area</span>
<div class="inp" style="left:730.5px;top:1046px;width:220px;height:45.5px;"></div>
<span class="t" style="left:555.0px;top:1110px;font-size:24px;line-height:27px;letter-spacing:-0.120px;color:#111;">Production Line</span>
<div class="inp" style="left:730.5px;top:1098px;width:220px;height:45.5px;"></div>
<span class="t" style="left:574.8px;top:1162px;font-size:24px;line-height:27px;letter-spacing:-0.587px;color:#111;">Specific Break</span>
<div class="inp" style="left:730.5px;top:1152.2px;width:220px;height:45.5px;"></div>
<span class="t" style="left:621.2px;top:1216px;font-size:24px;line-height:27px;letter-spacing:-0.527px;color:#000;font-weight:bold;">Cut Spec</span>
<div style="left:728px;top:1202.3999999999999px;width:544.8px;height:51.3px;border:3.2px solid #e5463f;box-shadow:inset 0 0 0 1.2px #9c9c9c;background:linear-gradient(#f0f0f0,#e5e5e5)"></div>
<svg style="left:1245px;top:1222.3px" width="12" height="9" viewBox="0 0 12 9" fill="none" stroke="#4a4a4a" stroke-width="2"><path d="M1 1.5 L5.8 6.8 L10.6 1.5"/></svg>
<span class="t" style="left:571.4px;top:1268px;font-size:24px;line-height:27px;letter-spacing:-0.240px;color:#111;">Planning Type</span>
<div class="inp" style="left:730.5px;top:1258px;width:220px;height:45.5px;"></div>
<span class="t" style="left:565.0px;top:1321px;font-size:24px;line-height:27px;letter-spacing:-0.649px;color:#111;">Sales Category</span>
<div class="inp" style="left:730.5px;top:1312px;width:220px;height:45.5px;"></div>
<span class="t" style="left:443.3px;top:1375px;font-size:24px;line-height:27px;letter-spacing:-0.478px;color:#111;">Sales Dashboard Category</span>
<div class="inp" style="left:730.5px;top:1364.4px;width:220px;height:45.5px;"></div>
<span class="t" style="left:666.6px;top:1427px;font-size:24px;line-height:27px;letter-spacing:0.041px;color:#000;font-weight:bold;">Type</span>
<div class="cmb" style="left:730.5px;top:1418px;width:220px;height:45.5px;"></div>
<span class="t" style="left:742.2px;top:1427px;font-size:24px;line-height:27px;letter-spacing:-0.448px;color:#111;">Finished Goods</span>
<svg style="left:925.4px;top:1435px" width="12" height="10" viewBox="0 0 12 10" fill="none" stroke="#555" stroke-width="2"><path d="M1 1.8 L6 7.6 L11 1.8"/></svg>
<span class="t" style="left:649.8px;top:1481px;font-size:24px;line-height:27px;letter-spacing:-0.358px;color:#000;font-weight:bold;">Status</span>
<div class="cmb" style="left:730.5px;top:1470.2px;width:220px;height:45.5px;"></div>
<span class="t" style="left:742.2px;top:1479px;font-size:24px;line-height:27px;letter-spacing:0.203px;color:#111;">Admin</span>
<svg style="left:925.4px;top:1487.2px" width="12" height="10" viewBox="0 0 12 10" fill="none" stroke="#555" stroke-width="2"><path d="M1 1.8 L6 7.6 L11 1.8"/></svg>
<div class="cb" style="left:732.4px;top:1532.3px;width:27.6px;height:25.2px;"></div>
<span class="t" style="left:771.0px;top:1532px;font-size:24px;line-height:27px;letter-spacing:-0.450px;color:#111;">Uses CutLogix Label Printer</span>
<div class="cb" style="left:732.4px;top:1572.3px;width:27.6px;height:25.2px;"></div>
<span class="t" style="left:771.0px;top:1572px;font-size:24px;line-height:27px;letter-spacing:-0.201px;color:#111;">Waste Product</span>
<div class="cb" style="left:732.4px;top:1612.3px;width:27.6px;height:25.2px;"></div>
<span class="t" style="left:771.0px;top:1612px;font-size:24px;line-height:27px;letter-spacing:0.015px;color:#111;">Do Not Include In Production Data</span>
<span class="t" style="left:2247.0px;top:1297px;font-size:24px;line-height:27px;letter-spacing:-0.159px;color:#111;">No Label Available</span>
<div style="left:412px;top:879px;width:2582px;height:793.5px;border:5px solid #d0391e"></div>
</body></html>
